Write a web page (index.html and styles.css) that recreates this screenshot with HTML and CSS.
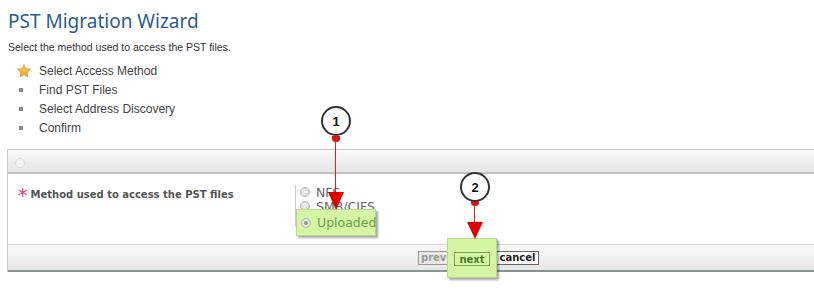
FILE: index.html
```html
<!DOCTYPE html>
<html>
<head>
<meta charset="utf-8">
<link rel="stylesheet" href="styles.css">
</head>
<body>
<div class="page">
  <h1 class="title">PST Migration Wizard</h1>
  <p class="sub">Select the method used to access the PST files.</p>
  <ul class="steps">
    <li class="step current">
      <svg class="star" width="14" height="14" viewBox="0 0 14 14"><defs><linearGradient id="sg" x1="0" y1="0" x2="0" y2="1"><stop offset="0" stop-color="#ffd86a"/><stop offset="1" stop-color="#f0a020"/></linearGradient></defs><path d="M7 0.6 L8.9 4.8 L13.4 5.2 L10 8.2 L11 12.8 L7 10.4 L3 12.8 L4 8.2 L0.6 5.2 L5.1 4.8 Z" fill="url(#sg)" stroke="#d98a1a" stroke-width="0.8" stroke-linejoin="round"/></svg>
      <span>Select Access Method</span>
    </li>
    <li class="step"><i class="sq"></i><span>Find PST Files</span></li>
    <li class="step"><i class="sq"></i><span>Select Address Discovery</span></li>
    <li class="step"><i class="sq"></i><span>Confirm</span></li>
  </ul>

  <div class="panel">
    <div class="panel-head"><i class="dot"></i></div>
    <div class="panel-body">
      <div class="field-label"><span class="req">*</span>Method used to access the PST files</div>
      <div class="radios">
        <label class="radio"><i class="rb"></i>NFS</label>
        <label class="radio"><i class="rb"></i>SMB/CIFS</label>
        <label class="radio hl"><i class="rb on"></i>Uploaded</label>
      </div>
    </div>
    <div class="panel-foot">
      <span class="btn prev">prev</span>
      <span class="nextwrap"><span class="btn next">next</span></span>
      <span class="btn cancel">cancel</span>
    </div>
  </div>

  <div class="callout c1"><span class="num">1</span></div>
  <div class="pointer p1"><i class="pin"></i><i class="line"></i><i class="head"></i></div>
  <div class="callout c2"><span class="num">2</span></div>
  <div class="pointer p2"><i class="pin"></i><i class="line"></i><i class="head"></i></div>
</div>
</body>
</html>
```
FILE: styles.css
```css
html, body { margin: 0; padding: 0; background: #fff; overflow: hidden; }
.page { position: relative; padding: 8px 0 0 7px; height: 286px; }

.title {
  margin: 0 0 0 1px;
  font: normal 19px/26px "Noto Sans", "DejaVu Sans", Verdana, sans-serif;
  color: #2b5d8c;
}
.sub {
  margin: 6px 0 0 1px;
  font: 10.5px/14px "Liberation Sans", Arial, sans-serif;
  color: #333;
}
.steps { list-style: none; margin: 7px 0 0 0; padding: 0; }
.step {
  display: flex; align-items: center;
  height: 19px;
  font: 12px "Liberation Sans", Arial, sans-serif;
  color: #444;
}
.star { margin-left: 10px; margin-right: 8px; flex: none; }
.sq { display: block; width: 4px; height: 4px; background: #888; margin-left: 12px; margin-right: 16px; flex: none; }

.panel {
  margin-top: 12px;
  margin-right: -20px;
  border-left: 1px solid #c8c8c8;
}
.panel-head {
  height: 22px;
  border-top: 1px solid #c4c4c4;
  border-bottom: 2px solid #c2c2c2;
  background: linear-gradient(#fafafa, #ececec 60%, #e6e6e6);
  display: flex; align-items: center;
}
.dot {
  width: 8px; height: 8px; border-radius: 50%;
  border: 1px solid #ddd; background: #f4f4f4;
  margin-left: 7px; margin-top: 4px;
}
.panel-body {
  height: 70px;
  background: #fff;
  display: flex;
  border-bottom: 1px solid #d4d4d4;
}
.field-label {
  width: 277px;
  padding: 12px 0 0 10px;
  font: bold 10px "DejaVu Sans", Verdana, sans-serif;
  color: #555;
  display: flex; align-items: baseline;
}
.req { color: #e0406a; font-size: 19px; line-height: 10px; margin-right: 3px; font-weight: normal; position: relative; top: 4px; }
.radios {
  margin-top: 11px;
  border-left: 1px solid #ccc;
  height: 42px;
  display: flex; flex-direction: column;
}
.radio {
  display: flex; align-items: center;
  height: 14px; flex: none;
  padding-left: 4px;
  font: 12.5px "DejaVu Sans", Verdana, sans-serif;
  color: #666;
}
.rb {
  flex: none;
  width: 8px; height: 8px; border-radius: 50%;
  border: 1px solid #b8b8b8;
  background: radial-gradient(#f4f4f4, #d4d4d4);
  margin-right: 6px;
  position: relative;
}
.rb.on::after {
  content: ""; position: absolute; left: 2px; top: 2px;
  width: 4px; height: 4px; border-radius: 50%; background: #8aa070;
}
.radio.hl {
  position: relative;
  z-index: 3;
  height: 25px;
  margin-top: -4px;
  width: 74px;
  padding-left: 4px;
  background: #d6f5a4;
  border: 1px solid #b8d890;
  box-shadow: 2px 2px 2px rgba(0,0,0,0.35);
  color: #6aa04a;
}
.panel-foot {
  height: 25px;
  background: linear-gradient(#fafafa, #ececec 70%, #e4e4e4);
  border-bottom: 2px solid #8a9494;
  display: flex; align-items: center;
  padding-left: 410px;
}
.btn {
  display: inline-flex; align-items: center;
  height: 12px;
  padding: 0 2px;
  font: bold 10px "DejaVu Sans", Verdana, sans-serif;
  border: 1px solid #888;
  background: #f6f6f6;
}
.prev { color: #999; border-color: #999; background: #e8e8e8; }
.nextwrap {
  position: relative; z-index: 3;
  background: #d6f5a4;
  border: 1px solid #b8d890;
  box-shadow: 2px 2px 2px rgba(0,0,0,0.35);
  padding: 10px 6px;
  margin: 0 -1px 0 -2px;
}
.next { color: #4a7a2a; background: #d6f5a4; border-color: #7aa050; padding: 0 4px; }
.cancel { color: #222; border-color: #666; background: #fff; padding: 0 3px; }

.callout {
  position: absolute; z-index: 5;
  width: 26px; height: 26px;
  border: 2px solid #333; border-radius: 50%;
  background: #fff;
  display: flex; align-items: center; justify-content: center;
  font: bold 13px "Liberation Sans", Arial, sans-serif; color: #111;
}
.c1 { left: 321px; top: 106px; }
.c2 { left: 460px; top: 172px; }
.pointer { position: absolute; z-index: 4; width: 20px; }
.pin { position: absolute; left: 6px; top: 0; width: 8px; height: 6px; background: #e01010; border-radius: 0 0 50% 50%; }
.line { position: absolute; left: 9px; top: 4px; width: 1px; background: #e02020; }
.head { position: absolute; left: 2px; width: 0; height: 0; border-left: 8px solid transparent; border-right: 8px solid transparent; border-top: 18px solid #e00000; }
.p1 { left: 326px; top: 136px; }
.p1 .line { height: 56px; }
.p1 .head { top: 56px; }
.p2 { left: 465px; top: 200px; }
.p2 .line { height: 22px; }
.p2 .head { top: 22px; border-top-width: 17px; }
```
